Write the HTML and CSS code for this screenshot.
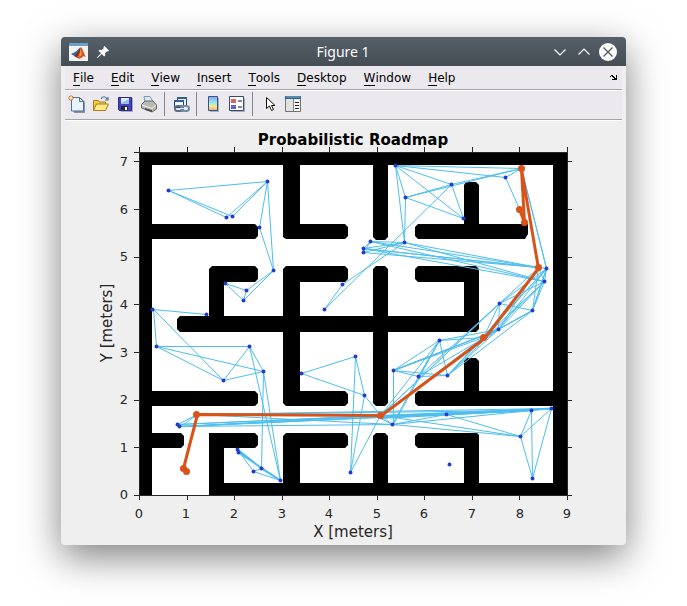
FILE: index.html
```
<!DOCTYPE html>
<html lang="en">
<head>
<meta charset="utf-8">
<title>Figure 1</title>
<link rel="stylesheet" href="styles.css">
</head>
<body>
<main class="window">
  <header class="titlebar">
    <div class="title-side">
      <svg class="app-icon" viewBox="0 0 19 18" aria-hidden="true">
        <rect width="19" height="18" fill="#f3f3f3"/>
        <rect width="19" height="3" fill="#6f9fc6"/>
        <path d="M2 11l5-2.500 4-4 1 3-2 4-2 3z" fill="#2d6fa6"/>
        <path d="M5 13l3-3 4-6-1 7-2 4z" fill="#8f2b1c"/>
        <path d="M12 4c2 2 3 7 5 10-2-1-3-1-4 .5L10 16l-2-2.500c2-1 3-6 4-9.500z" fill="#d9541e"/>
        <path d="M12 5l.5 7-2.500 2z" fill="#f3a345"/>
      </svg>
      <button class="icon-button" type="button" aria-label="Pin window">
        <svg class="pin" viewBox="0 0 12 12"><path d="M7.500 0L12 4.500l-1 1-1-.3-2 2 .2 2.300-1 1-2.500-2.500L.8 12 0 11.200l4-3.900L1.500 4.800l1-1 2.300.2 2-2-.3-1z" fill="#fff"/></svg>
      </button>
    </div>
    <h1 class="title">Figure 1</h1>
    <div class="title-side title-actions">
      <button class="icon-button" type="button" aria-label="Minimize"><svg class="chevron" viewBox="0 0 12 12"><path d="M.5 3.500L6 9l5.500-5.500" fill="none" stroke="#fff" stroke-width="1.200"/></svg></button>
      <button class="icon-button" type="button" aria-label="Maximize"><svg class="chevron" viewBox="0 0 12 12"><path d="M.5 8.500L6 3l5.500 5.500" fill="none" stroke="#fff" stroke-width="1.200"/></svg></button>
      <button class="icon-button" type="button" aria-label="Close"><svg class="close" viewBox="0 0 18 18"><circle cx="9" cy="9" r="9" fill="#fcfcfc"/><path d="M4.500 4.500l9 9m0-9l-9 9" stroke="#4d565e" stroke-width="1.200"/></svg></button>
    </div>
  </header>

  <nav class="menubar">
    <button class="menu" type="button"><u>F</u>ile</button>
    <button class="menu" type="button"><u>E</u>dit</button>
    <button class="menu" type="button"><u>V</u>iew</button>
    <button class="menu" type="button"><u>I</u>nsert</button>
    <button class="menu" type="button"><u>T</u>ools</button>
    <button class="menu" type="button"><u>D</u>esktop</button>
    <button class="menu" type="button"><u>W</u>indow</button>
    <button class="menu" type="button"><u>H</u>elp</button>
    <button class="icon-button dock" type="button" aria-label="Dock figure"><svg class="dock-icon" viewBox="0 0 7 5" shape-rendering="crispEdges"><path d="M0 1h1V0h2v1h1v1h1v1h1V0h1v5H2V4h2V3H3V2H2V1H1v1H0z" fill="#000"/></svg></button>
  </nav>

  <div class="toolbar" role="toolbar" aria-label="Figure toolbar">
    <button class="tool" type="button" aria-label="New figure"><svg viewBox="0 0 18 18">
      <path d="M4 3h9l4 4v11H6z" fill="#8593a6"/><path d="M3.500 2.500h8l4 4v9.500h-12z" fill="#eaf4ff" stroke="#4e7199"/><path d="M11.500 2.500v4h4z" fill="#fff" stroke="#4e7199"/>
      <path d="M3 0v6M0 3h6M1 1l4 4M5 1L1 5" stroke="#db6b3a"/><circle cx="3" cy="3" r="1.500" fill="#ffe9a0"/></svg></button>
    <button class="tool" type="button" aria-label="Open file"><svg viewBox="0 0 18 18">
      <path d="M1.500 15.500V5.500h5l1 1.500h6v8.500z" fill="#f3c948" stroke="#a97d1b"/><path d="M1.500 15.500l3-6.500h12l-3 6.500z" fill="#ffec87" stroke="#a97d1b"/><path d="M9 4c1-3 5-3 6 0m1-2v3h-3" fill="none" stroke="#54708f" stroke-width="1.200"/></svg></button>
    <button class="tool" type="button" aria-label="Save figure"><svg viewBox="0 0 18 18">
      <path d="M3 3h14v14H5z" fill="#a9abc0"/><path d="M2.500 2.500h13v13h-12l-1-1z" fill="#4444bd" stroke="#2b2b88"/><rect x="5" y="3" width="8" height="6" fill="#dfeaff"/><path d="M5 8l8-4v5H5z" fill="#9cbcf0"/><rect x="5" y="11" width="7" height="4" fill="#252640"/><rect x="9" y="12" width="2" height="3" fill="#fff"/></svg></button>
    <button class="tool" type="button" aria-label="Print figure"><svg viewBox="0 0 18 18">
      <path d="M5 7L4 1.500h6l3 5z" fill="#d8e9fb" stroke="#7e96b3"/><path d="M1.500 9.500L5 6h8l3.500 4v4L12 17 1.500 13z" fill="#b9b9b5" stroke="#696969"/><path d="M2 10l10 3.500 4-3.500" fill="none" stroke="#f4f4f4"/><path d="M5 13l7 2v2l-7-2z" fill="#53534f"/><path d="M13 14l2-1" stroke="#dda544"/></svg></button>
    <span class="separator"></span>
    <button class="tool" type="button" aria-label="Link plot"><svg viewBox="0 0 18 18">
      <path d="M5.500 6V2.500h9v8H13" fill="#e8effa" stroke="#244674"/><path d="M5 3h10" stroke="#315f9c" stroke-width="2"/><path d="M2.500 5.500h9v7h-9z" fill="#f5f9ff" stroke="#244674"/><path d="M2 6h10" stroke="#315f9c" stroke-width="2"/>
      <rect x="3" y="11" width="8" height="5" rx="2.500" fill="none" stroke="#596e89" stroke-width="2"/><rect x="9" y="11" width="8" height="5" rx="2.500" fill="none" stroke="#778ba3" stroke-width="2"/><path d="M6 13.500h8" stroke="#dce9f6"/></svg></button>
    <span class="separator"></span>
    <button class="tool" type="button" aria-label="Insert colorbar"><svg viewBox="0 0 18 18">
      <defs><linearGradient id="spectrum" x2="0" y2="1"><stop stop-color="#8d9df2"/><stop offset=".4" stop-color="#8de5ed"/><stop offset=".7" stop-color="#f3ed91"/><stop offset="1" stop-color="#f59b8c"/></linearGradient></defs><path d="M6 3h9v14H6z" fill="#a7adba"/><path d="M4.500 1.500h9v14h-9z" fill="url(#spectrum)" stroke="#35577f"/></svg></button>
    <button class="tool" type="button" aria-label="Insert legend"><svg viewBox="0 0 18 18">
      <path d="M3 3h14v14H3z" fill="#a7adba"/><path d="M1.500 1.500h14v14h-14z" fill="#fff" stroke="#304c73"/><path d="M3 4h5v4H3z" fill="#e65d5d"/><path d="M3 10h5v4H3z" fill="#6262df"/><path d="M10 6h4m-4 6h4" stroke="#111"/></svg></button>
    <span class="separator"></span>
    <button class="tool" type="button" aria-label="Edit plot"><svg viewBox="0 0 18 18"><path d="M6.500 2.500v11l3-2.500 2 4.500 2-1-2-4h3.500z" fill="#fff" stroke="#111"/></svg></button>
    <button class="tool" type="button" aria-label="Open property inspector"><svg viewBox="0 0 18 18">
      <path d="M1.500 1.500h15v15h-15z" fill="#e1e1df" stroke="#727272"/><path d="M1 1h16v3H1z" fill="#31638e"/><path d="M2 2h14" stroke="#78b3d7"/><path d="M10 5h6v11h-6z" fill="#fff"/><path d="M9.500 4v12" stroke="#878787"/><path d="M11 7.500h4m-4 3h4m-4 3h4" stroke="#222"/></svg></button>
  </div>

  <section class="figure">
    <svg class="plot" viewBox="61 121 565 424" role="img" aria-label="Probabilistic Roadmap">
      <rect x="139" y="152" width="428" height="343" fill="#fff"/>
      <g class="walls">
        <path d="M139 152H567V495H209V433H255L258 436V445L255 448H224V483H283V436L286 433H345L348 436V445L345 448H300V483H373V436L376 433H385L388 436V483H464V448H418L415 445V436L418 433H477L479 435V483H553V406H418L415 403V394L418 391H464V361L466 358H476L479 361V391H553V165H388V237L385 240H376L373 237V165H300V224H345L348 227V236L345 239H286L283 237V165H152V224H255L258 227V236L255 239H152V391H255L258 394V403L255 406H152V433H181L184 436V445L181 448H152V495H139Z"/>
        <path d="M464 224V185L466 182H476L479 185V224H528V234L525 239H418L415 236V227L418 224Z"/>
        <path d="M180 316H209V269L212 266H255L258 269V279L255 282H224V316H283V269L286 266H345L348 269V279L345 282H300V316H373V269L376 266H385L388 269V316H464V282H418L415 279V269L418 266H476L479 269V329L476 332H388V403L385 406H376L373 403V332H300V391H345L348 394V403L345 406H286L283 403V332H180L177 329V319Z"/>
      </g>
      <g class="edges">
        <path d="M168 190L267 181L226 217L168 190L232 216L267 181L259 227L273 270L267 181M225 283L246 290L273 270L243 300L225 283M243 300L246 290"/>
        <path d="M206 314L153 309L156 346H249L223 380L156 346L263 371L223 380L153 309M249 346L263 371L280 480L249 346M263 371L261 468"/>
        <path class="dense" d="M237 449L261 468L280 480L238 452"/><path d="M237 449L253 471L280 480M253 471L261 468"/>
        <path d="M301 373L355 356L364 395L301 373M355 356L350 472L364 395L380 415L350 472M380 415L392 424"/>
        <path d="M395 165L405 197L404 242L395 165L521 168M395 165L505 177L521 168L405 197L463 218L395 165L451 184L521 168M451 184L463 218M451 184L324 309M505 177L525 222M405 197L451 184"/>
        <path d="M370 241L404 242L363 252L363 248L370 241L363 252M363 248L404 242L342 284L324 309M370 241L538 267L363 248L544 281L370 241M363 252L538 267L404 242L544 281M363 248L538 267"/>
        <path d="M521 168L546 268L538 267L521 168L546 268L544 281L538 267L532 310L546 268L499 303L538 267M546 268L498 329L538 267M544 281L532 310L499 303L544 281L498 329L499 303M532 310L483 337L546 268M544 281L483 337L499 303M498 329L532 310M546 268L532 310M538 267L483 337"/>
        <path d="M546 268L447 375L498 329L393 370L439 340L483 337L393 370L418 376L439 340L498 329L418 376L447 375L439 340L393 424L393 370L447 375M393 370L498 329M418 376L499 303M418 376L392 424M439 340L380 415L483 337L447 375L544 281M483 337L532 310L447 375M380 415L498 329L393 370M380 415L499 303M439 340L418 376M380 415L499 303"/>
        <path d="M177 424L197 414L180 426L177 424L380 415L551 408L197 414L531 410L180 426L446 414L380 415L180 426L551 408L177 424M197 414L392 424L180 426M392 424L446 414L531 410L380 418L392 424L551 408M446 414L520 436L392 424M380 415L520 436M531 410L520 436L532 478L531 410M551 408L532 478M520 436L551 408"/>
        <path class="dense" d="M380 416L446 414L551 408"/>
      </g>
      <path class="nodes" d="M168 190h0M267 181h0M226 217h0M232 216h0M259 227h0M273 270h0M225 283h0M246 290h0M243 300h0M152 309h0M206 314h0M156 346h0M223 380h0M249 346h0M263 371h0M177 424h0M179 426h0M237 449h0M238 452h0M253 471h0M261 468h0M280 480h0M395 165h0M405 197h0M404 242h0M370 241h0M363 248h0M363 252h0M342 284h0M324 309h0M451 184h0M463 218h0M505 177h0M546 268h0M544 281h0M499 303h0M532 310h0M498 329h0M439 340h0M447 375h0M418 376h0M393 370h0M392 424h0M446 414h0M531 410h0M551 408h0M520 436h0M532 478h0M449 464h0M301 373h0M355 356h0M364 395h0M350 472h0"/>
      <path class="route" d="M186 471L183 468L197 414L381 415L484 338L538 268L521 169L524 222L519 209"/>
      <path class="route-nodes" d="M186 471h0M183 468h0M196 414h0M380 415h0M483 337h0M538 267h0M521 168h0M524 222h0M519 209h0"/>
      <path class="ticks" d="M139 147V500M134 495H572M567 147V500M134 152H567M187 495v5M234 495v5M282 495v5M329 495v5M377 495v5M424 495v5M472 495v5M519 495v5M187 147v5M234 147v5M282 147v5M329 147v5M377 147v5M424 147v5M472 147v5M519 147v5M134 447h5M134 400h5M134 352h5M134 304h5M134 257h5M134 209h5M134 161h5M567 447h5M567 400h5M567 352h5M567 304h5M567 257h5M567 209h5M567 161h5"/>
      <text class="plot-title" x="353" y="145">Probabilistic Roadmap</text>
      <g class="x-labels">
        <text x="139" y="518">0</text><text x="186" y="518">1</text><text x="234" y="518">2</text><text x="282" y="518">3</text><text x="329" y="518">4</text><text x="377" y="518">5</text><text x="424" y="518">6</text><text x="472" y="518">7</text><text x="520" y="518">8</text><text x="567" y="518">9</text>
      </g>
      <g class="y-labels">
        <text x="128" y="499">0</text><text x="128" y="452">1</text><text x="128" y="404">2</text><text x="128" y="357">3</text><text x="128" y="309">4</text><text x="128" y="261">5</text><text x="128" y="214">6</text><text x="128" y="166">7</text>
      </g>
      <text class="axis-title" x="353" y="537">X [meters]</text>
      <text class="axis-title" transform="translate(112 323) rotate(-90)">Y [meters]</text>
    </svg>
  </section>
</main>
</body>
</html>
```
FILE: styles.css
```
* {
  box-sizing: border-box;
}

body {
  margin: 0;
  padding: 37px 61px 61px;
  background: #fff;
  font-family: "DejaVu Sans", sans-serif;
}

button {
  padding: 0;
  border: 0;
  background: none;
  color: inherit;
  font: inherit;
}

svg {
  display: block;
}

.window {
  border-radius: 4px;
  background: #efefef;
  box-shadow: 0 12px 38px rgba(0, 0, 0, 0.5);
  overflow: hidden;
}

.titlebar {
  display: grid;
  grid-template-columns: 1fr auto 1fr;
  align-items: center;
  height: 29px;
  padding: 0 9px 0 8px;
  background: linear-gradient(#566068, #454d54);
  color: #fcfcfc;
}

.title-side {
  display: flex;
  align-items: center;
  gap: 6px;
}

.icon-button {
  display: grid;
  place-items: center;
  width: 18px;
  height: 18px;
}

.title-actions {
  justify-content: flex-end;
}

.app-icon {
  width: 19px;
  height: 18px;
}

.pin,
.chevron {
  width: 12px;
  height: 12px;
}

.close {
  width: 18px;
  height: 18px;
}

.title {
  margin: 0;
  font: 400 14px/20px "Noto Sans", sans-serif;
}

.menubar,
.toolbar {
  display: flex;
  align-items: center;
  margin: 0 4px;
  border-bottom: 1px solid #a5a4a9;
  background: #ebe9ed;
  box-shadow: 0 1px #fff;
}

.menubar {
  height: 24px;
  margin-bottom: 1px;
  color: #000;
  font-size: 12px;
  line-height: 14px;
}

.menu {
  padding: 1px 9px 0 8px;
}

.menu u {
  display: inline-block;
  border-bottom: 1px solid #000;
  text-decoration: none;
}

.dock {
  margin-left: auto;
}

.dock-icon {
  width: 7px;
  height: 5px;
}

.toolbar {
  height: 29px;
  margin-bottom: 1px;
  padding-bottom: 2px;
}

.tool {
  display: grid;
  place-items: center;
  width: 24px;
  height: 24px;
}

.tool svg {
  width: 18px;
  height: 18px;
}

.separator {
  width: 1px;
  height: 24px;
  margin: 0 4px 0 3px;
  background: #858489;
}

.plot {
  width: 100%;
  height: auto;
}

.walls {
  fill: #000;
}

.edges {
  fill: none;
  stroke: #4dbeee;
  stroke-width: 1;
  transform: translate(0.5px, 0.5px);
}

.edges .dense {
  stroke-width: 2;
}

.nodes,
.route,
.route-nodes {
  fill: none;
  stroke-linecap: round;
  transform: translate(0.5px, 0.5px);
}

.nodes {
  stroke: #233bd1;
  stroke-width: 4;
}

.route {
  stroke: #d95319;
  stroke-width: 3;
  stroke-linejoin: round;
}

.route-nodes {
  stroke: #d95319;
  stroke-width: 7;
}

.ticks {
  fill: none;
  stroke: #262626;
  stroke-width: 1;
  shape-rendering: crispEdges;
}

.plot text {
  fill: #262626;
  font-size: 13px;
  text-anchor: middle;
}

.plot .plot-title {
  fill: #000;
  font-size: 15px;
  font-weight: 700;
}

.plot .y-labels text {
  text-anchor: end;
}

.plot .axis-title {
  font-size: 15px;
}
```
